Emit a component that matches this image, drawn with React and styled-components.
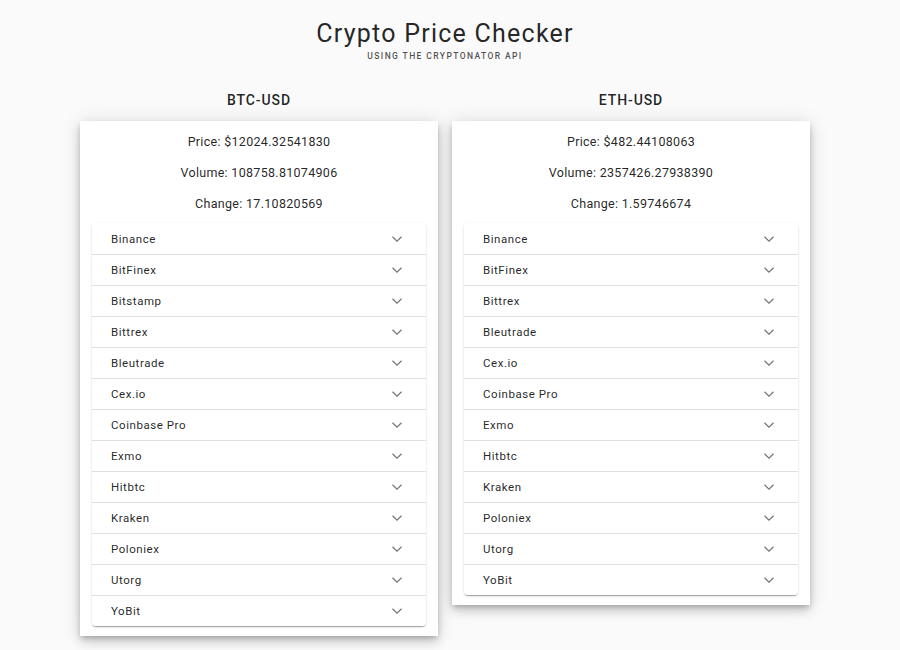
import React from 'react'
import styled, { createGlobalStyle } from 'styled-components'

const GlobalStyle = createGlobalStyle`
  body {
    margin: 0;
    background: #fafafa;
    font-family: Roboto, "Liberation Sans", sans-serif;
    color: rgba(0,0,0,0.87);
  }
`

const markets = [
  {
    pair: 'BTC-USD',
    price: '$12024.32541830',
    volume: '108758.81074906',
    change: '17.10820569',
    exchanges: ['Binance', 'BitFinex', 'Bitstamp', 'Bittrex', 'Bleutrade', 'Cex.io', 'Coinbase Pro', 'Exmo', 'Hitbtc', 'Kraken', 'Poloniex', 'Utorg', 'YoBit'],
  },
  {
    pair: 'ETH-USD',
    price: '$482.44108063',
    volume: '2357426.27938390',
    change: '1.59746674',
    exchanges: ['Binance', 'BitFinex', 'Bittrex', 'Bleutrade', 'Cex.io', 'Coinbase Pro', 'Exmo', 'Hitbtc', 'Kraken', 'Poloniex', 'Utorg', 'YoBit'],
  },
]

function Chevron() {
  return (
    <svg width="12" height="8" viewBox="0 0 12 8">
      <path d="M1.5 1.8 6 6.1l4.5-4.3" fill="none" stroke="rgba(0,0,0,0.55)" strokeWidth="1.2" />
    </svg>
  )
}

export default function App() {
  return (
    <>
      <GlobalStyle />
      <Page>
        <Header>
          <Title>Crypto Price Checker</Title>
          <Subtitle>Using the Cryptonator API</Subtitle>
        </Header>
        <Columns>
          {markets.map((m) => (
            <Column key={m.pair}>
              <Pair>{m.pair}</Pair>
              <Card>
                <Stat>Price: {m.price}</Stat>
                <Stat>Volume: {m.volume}</Stat>
                <Stat>Change: {m.change}</Stat>
                <Accordion>
                  {m.exchanges.map((ex) => (
                    <Row key={ex}>
                      <span>{ex}</span>
                      <Chevron />
                    </Row>
                  ))}
                </Accordion>
              </Card>
            </Column>
          ))}
        </Columns>
      </Page>
    </>
  )
}

const Page = styled.div`
  width: 890px;
  padding-top: 19px;
  padding-bottom: 20px;
`

const Header = styled.div`
  text-align: center;
`

const Title = styled.h1`
  margin: 0;
  font-size: 25px;
  font-weight: 400;
  line-height: 30px;
  letter-spacing: 1.25px;
  color: rgba(0,0,0,0.87);
`

const Subtitle = styled.div`
  margin-top: 2px;
  font-size: 8.5px;
  font-weight: 500;
  letter-spacing: 1.4px;
  text-transform: uppercase;
  color: rgba(0,0,0,0.7);
`

const Columns = styled.div`
  display: flex;
  justify-content: center;
  align-items: flex-start;
  gap: 14px;
  margin-top: 29px;
`

const Column = styled.div`
  width: 358px;
`

const Pair = styled.h2`
  margin: 0 0 11px;
  text-align: center;
  font-size: 14px;
  font-weight: 500;
  line-height: 20px;
  letter-spacing: 0.9px;
`

const Card = styled.div`
  background: #fff;
  padding: 13px 12px 10px;
  box-shadow: 0 3px 5px -1px rgba(0,0,0,0.2), 0 6px 10px 0 rgba(0,0,0,0.14), 0 1px 18px 0 rgba(0,0,0,0.12);
`

const Stat = styled.p`
  margin: 0 0 15px;
  text-align: center;
  font-size: 12.5px;
  line-height: 16px;
  letter-spacing: 0.3px;
`

const Accordion = styled.div`
  margin-top: -4px;
  border-radius: 4px;
  overflow: hidden;
  box-shadow: 0 2px 1px -1px rgba(0,0,0,0.2), 0 1px 1px 0 rgba(0,0,0,0.14), 0 1px 3px 0 rgba(0,0,0,0.12);
`

const Row = styled.div`
  display: flex;
  align-items: center;
  justify-content: space-between;
  height: 31px;
  box-sizing: border-box;
  padding: 0 23px 0 19px;
  font-size: 11.5px;
  letter-spacing: 0.55px;
  background: #fff;
  & + & {
    border-top: 1px solid rgba(0,0,0,0.12);
  }
  svg {
    display: block;
  }
`
